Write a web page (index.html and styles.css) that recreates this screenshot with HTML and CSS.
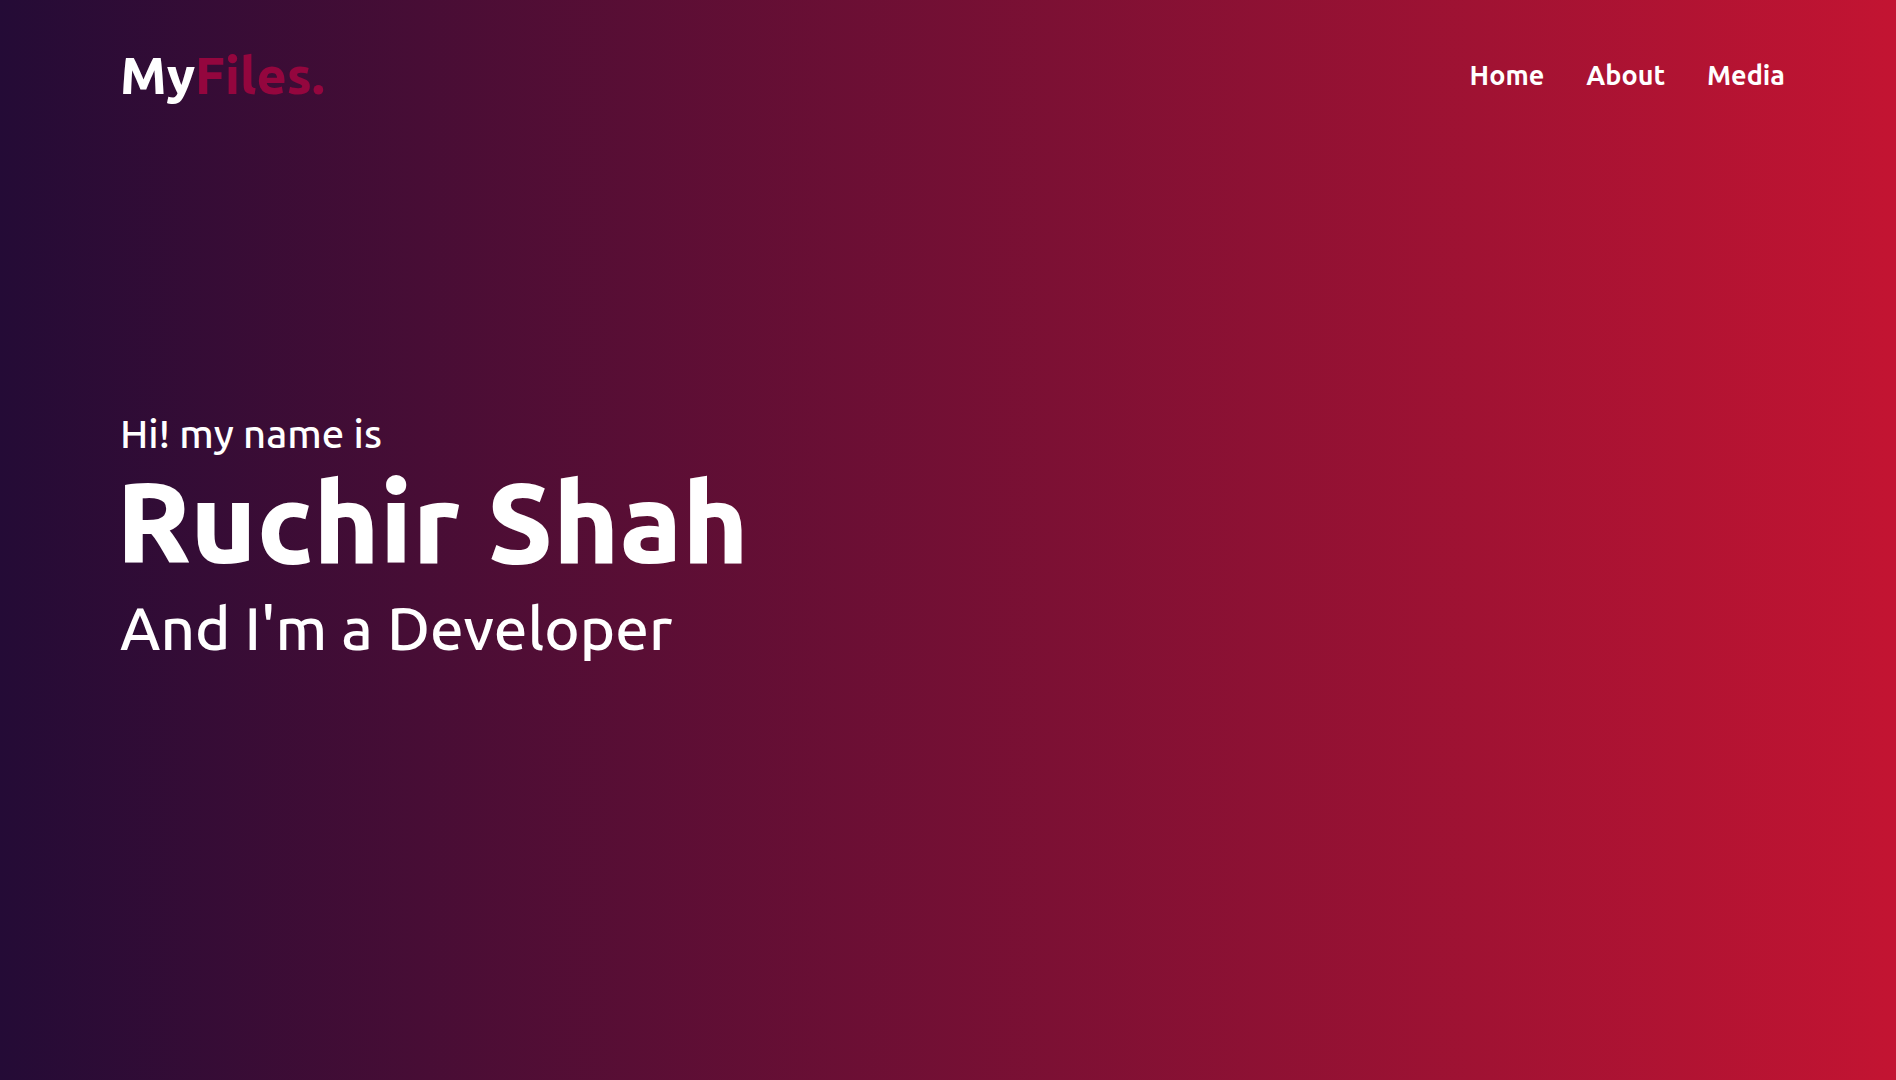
FILE: index.html
```html
<!DOCTYPE html>
<html lang="en">
<head>
<meta charset="utf-8">
<meta name="viewport" content="width=device-width, initial-scale=1">
<title>MyFiles.</title>
<link rel="stylesheet" href="styles.css">
</head>
<body>
<header class="navbar">
  <a class="logo" href="#">My<span class="logo-accent">Files.</span></a>
  <nav>
    <ul class="menu">
      <li><a href="#home">Home</a></li>
      <li><a href="#about">About</a></li>
      <li><a href="#media">Media</a></li>
    </ul>
  </nav>
</header>
<main class="home" id="home">
  <p class="greeting">Hi! my name is</p>
  <h1 class="name">Ruchir Shah</h1>
  <p class="role">And I'm a Developer</p>
</main>
</body>
</html>
```
FILE: styles.css
```css
* {
  box-sizing: border-box;
  margin: 0;
  padding: 0;
}

body {
  display: flex;
  flex-direction: column;
  min-height: 100vh;
  padding: 0 111px 0 120px;
  background: linear-gradient(to right, #240b36, #c31432);
  color: #fff;
  font-family: Ubuntu, "Noto Sans", sans-serif;
  font-weight: 500;
}

a {
  color: inherit;
  text-decoration: none;
}

.navbar {
  display: flex;
  align-items: center;
  justify-content: space-between;
  height: 150px;
}

.logo {
  font-size: 52px;
  font-weight: 800;
}

.logo-accent {
  color: #94063e;
}

.menu {
  display: flex;
  gap: 42px;
  list-style: none;
  font-size: 27px;
  font-weight: 700;
}

.home {
  flex: 1;
  display: flex;
  flex-direction: column;
  justify-content: center;
  padding-bottom: 148px;
}

.greeting {
  font-size: 40px;
  line-height: 44px;
}

.name {
  margin-left: -4px;
  font-size: 113px;
  font-weight: 800;
  line-height: 130px;
}

.role {
  font-size: 60px;
  line-height: 84px;
}
```
